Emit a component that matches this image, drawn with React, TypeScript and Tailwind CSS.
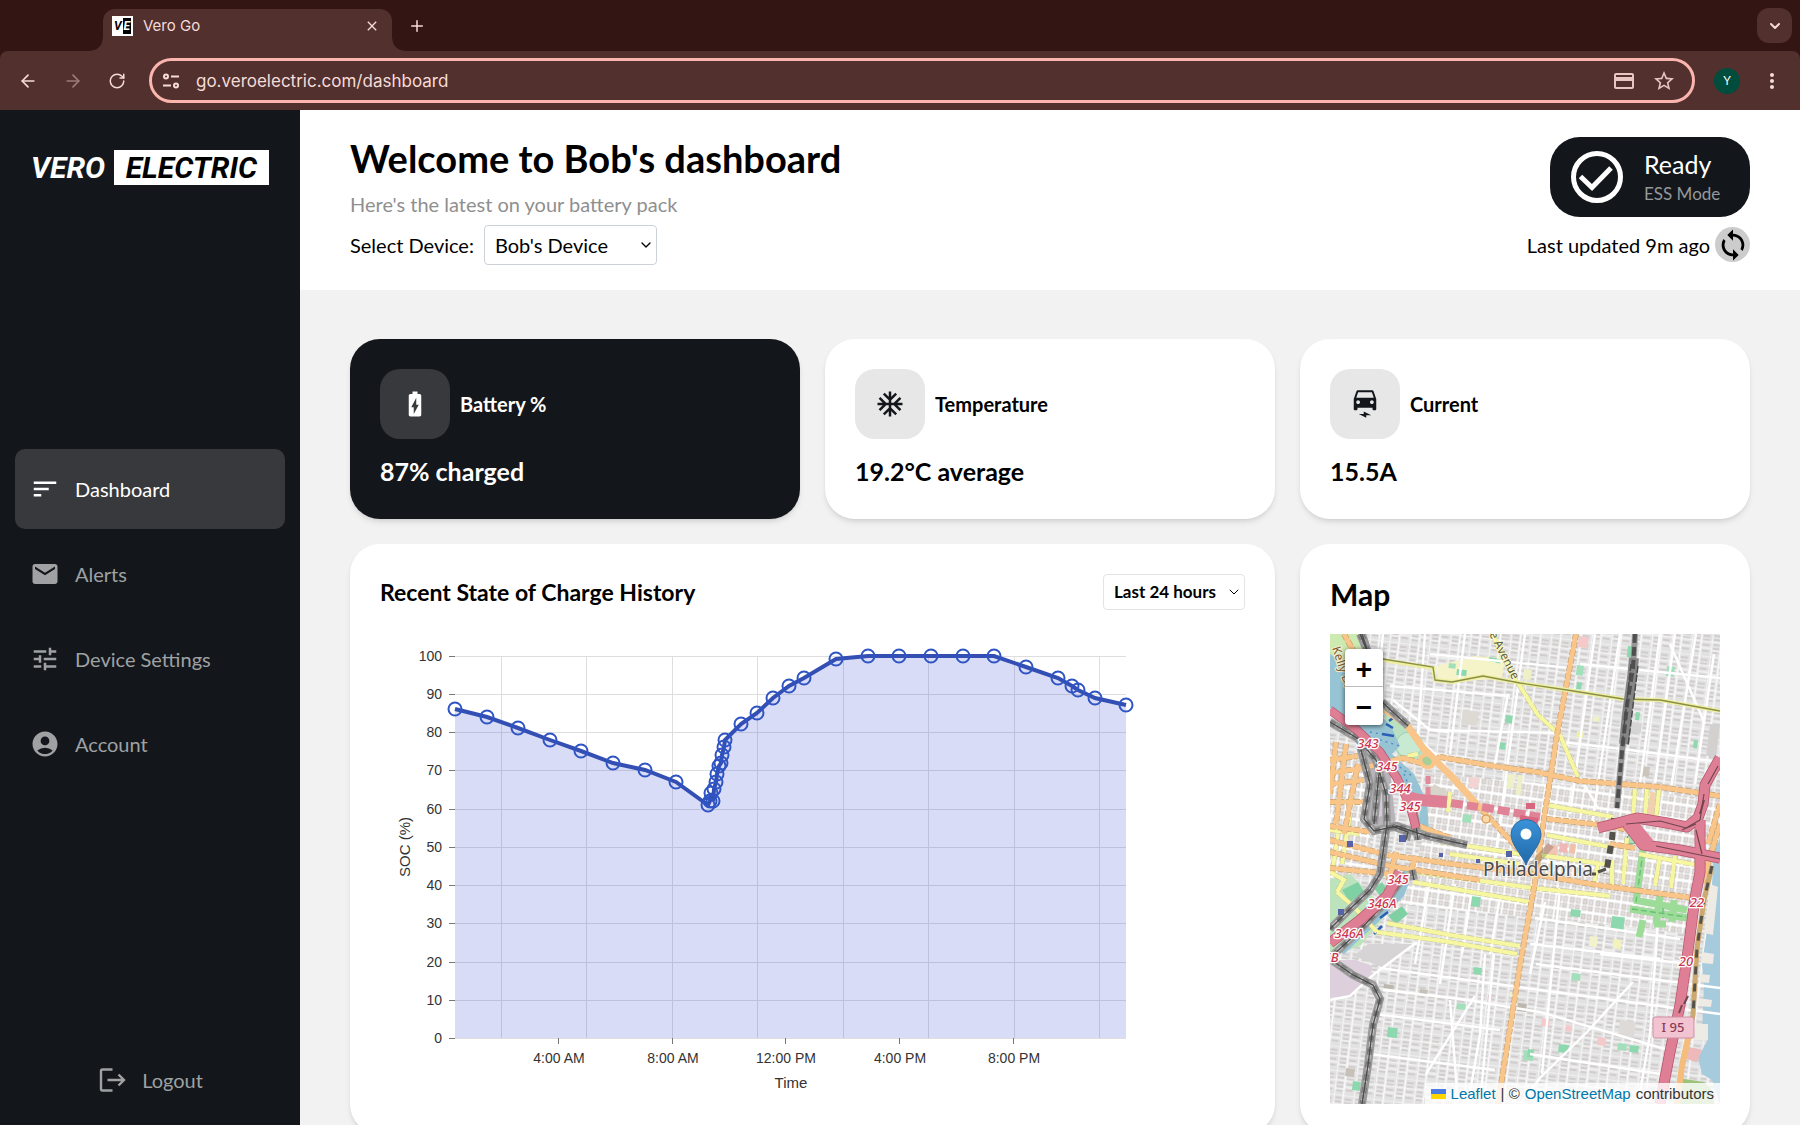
import type { ReactNode } from 'react';
import {
  MdAccountCircle,
  MdBatteryChargingFull,
  MdAcUnit,
  MdClose,
  MdEmail,
  MdLoop,
  MdMoreVert,
  MdOutlineCreditCard,
  MdSort,
  MdStarBorder,
  MdTune,
} from 'react-icons/md';
import { ArrowLeft, ArrowRight, ChevronDown, Plus, RotateCw } from 'lucide-react';

const navItems = [
  { label: 'Dashboard', Icon: MdSort, active: true },
  { label: 'Alerts', Icon: MdEmail, active: false },
  { label: 'Device Settings', Icon: MdTune, active: false },
  { label: 'Account', Icon: MdAccountCircle, active: false },
];

// [x inside the chart, state of charge in %]
const socPoints: [number, number][] = [
  [75, 86], [107, 84], [138, 81], [170, 78], [201, 75], [233, 72], [265, 70], [296, 67],
  [328, 61], [330, 62], [331, 64], [333, 62], [334, 65], [336, 67], [337, 69], [339, 71],
  [341, 72], [342, 74], [344, 76], [345, 78], [361, 82], [377, 85], [393, 89], [409, 92],
  [424, 94], [456, 99], [488, 100], [519, 100], [551, 100], [583, 100], [614, 100],
  [646, 97], [678, 94], [692, 92], [698, 91], [715, 89], [746, 87],
];

const yTicks = [0, 10, 20, 30, 40, 50, 60, 70, 80, 90, 100];
const xGrid = [122, 207, 293, 378, 464, 549, 635, 720];
const xTicks: [number, string][] = [
  [179, '4:00 AM'],
  [293, '8:00 AM'],
  [406, '12:00 PM'],
  [520, '4:00 PM'],
  [634, '8:00 PM'],
];

const socY = (value: number) => Math.round(428 - value * 3.825);

function BrowserBar() {
  return (
    <div className="shrink-0 bg-[#331613] font-[Inter,sans-serif] text-[#f6dbd7]">
      <div className="flex h-[51px] items-end pl-[103px] pr-2">
        <div className="relative flex h-[42px] w-[289px] items-center rounded-t-xl bg-[#51302e] pb-2 pl-[9px] pr-3">
          <span className="absolute -left-3 bottom-0 size-3 bg-[radial-gradient(circle_at_top_left,transparent_11px,#51302e_12px)]" />
          <span className="absolute -right-3 bottom-0 size-3 bg-[radial-gradient(circle_at_top_right,transparent_11px,#51302e_12px)]" />
          <span className="flex h-5 w-[21px] items-center justify-center gap-px bg-white font-[Roboto,sans-serif] text-xs font-bold italic leading-4 text-black">
            <span>V</span>
            <span className="bg-black px-px text-white">E</span>
          </span>
          <span className="ml-[10px] flex-1 text-[15px]">Vero Go</span>
          <button type="button" aria-label="Close tab">
            <MdClose className="size-4" />
          </button>
        </div>
        <button type="button" aria-label="New tab" className="mb-4 ml-4">
          <Plus className="size-[18px]" strokeWidth={2} />
        </button>
        <button
          type="button"
          aria-label="Search tabs"
          className="mb-2 ml-auto flex size-[35px] items-center justify-center rounded-xl bg-[#51302e]"
        >
          <ChevronDown className="size-4" strokeWidth={3} />
        </button>
      </div>

      <div className="flex h-[59px] items-center rounded-t-lg bg-[#51302e] pl-[18px] pr-4">
        <button type="button" aria-label="Back">
          <ArrowLeft className="size-5" strokeWidth={2} />
        </button>
        <button type="button" aria-label="Forward" className="ml-[25px] text-[#9b7b78]">
          <ArrowRight className="size-5" strokeWidth={2} />
        </button>
        <button type="button" aria-label="Reload" className="ml-[25px]">
          <RotateCw className="size-[18px]" strokeWidth={2} />
        </button>
        <div className="ml-[23px] flex h-[45px] flex-1 items-center rounded-full border-[3px] border-[#fbb5ae] pl-[11px] pr-4">
          <svg viewBox="0 0 16 16" className="size-4" fill="none" stroke="currentColor" strokeWidth="2">
            <circle cx="3" cy="3.5" r="2" />
            <path d="M8 3.5h8M0 12.5h8" />
            <circle cx="13" cy="12.5" r="2" />
          </svg>
          <input
            aria-label="Address"
            className="ml-[17px] h-8 min-w-0 flex-1 bg-transparent text-[17px] leading-8 outline-none"
            defaultValue="go.veroelectric.com/dashboard"
          />
          <MdOutlineCreditCard className="size-6 text-[#e8c5c1]" />
          <MdStarBorder className="ml-4 size-6 text-[#e8c5c1]" />
        </div>
        <span className="ml-[19px] flex size-[26px] items-center justify-center rounded-full bg-[#004d3d] text-xs text-white">
          Y
        </span>
        <button type="button" aria-label="Menu" className="ml-5">
          <MdMoreVert className="size-6" />
        </button>
      </div>
    </div>
  );
}

function Sidebar() {
  return (
    <aside className="grid w-[300px] shrink-0 grid-cols-1 grid-rows-[1fr_auto_1fr] bg-[#13171b] px-[15px] pb-[2px]">
      <div className="flex items-start justify-between pl-4 pr-4 pt-10 font-[Roboto,sans-serif] text-[30px] font-bold italic leading-[35px] text-white">
        <span>VERO</span>
        <span className="bg-white px-3 text-black">ELECTRIC</span>
      </div>

      <nav className="flex flex-col gap-[5px]">
        {navItems.map(({ label, Icon, active }) => (
          <a
            key={label}
            href="#"
            className={`flex h-20 items-center gap-[15px] rounded-[10px] pl-[15px] text-xl ${
              active ? 'bg-[#38393d] text-white' : 'text-[#9fa1a3]'
            }`}
          >
            <Icon className="size-[30px]" />
            {label}
          </a>
        ))}
      </nav>

      <button
        type="button"
        className="flex items-center gap-[15px] self-end justify-self-center pb-7 text-xl leading-[30px] text-[#9fa1a3]"
      >
        <svg viewBox="0 0 30 30" className="size-[30px]" fill="none" stroke="currentColor" strokeWidth="2.4">
          <path d="M15.5 4.5H5.5a1.5 1.5 0 0 0-1.5 1.5v18a1.5 1.5 0 0 0 1.5 1.5h10" />
          <path d="M10.5 15H27M21.5 9.5l5.5 5.5-5.5 5.5" />
        </svg>
        Logout
      </button>
    </aside>
  );
}

function Header() {
  return (
    <header className="flex justify-between bg-white px-[50px] pb-[25px] pt-6">
      <div>
        <h1 className="mb-[7px] text-[38px] font-bold leading-[48px]">Welcome to Bob's dashboard</h1>
        <p className="mb-[6px] text-xl leading-[30px] text-[#8f8f8f]">Here's the latest on your battery pack</p>
        <div className="flex items-center text-xl">
          <label htmlFor="device">Select Device:</label>
          <div className="relative ml-[10px]">
            <select
              id="device"
              className="h-10 w-[173px] appearance-none rounded border border-[#cdd2d8] bg-white pl-[10px]"
            >
              <option>Bob's Device</option>
            </select>
            <ChevronDown className="pointer-events-none absolute right-[3px] top-3 size-4" />
          </div>
        </div>
      </div>

      <div className="flex flex-col items-end pt-[3px]">
        <div className="flex h-20 w-[200px] items-center rounded-[30px] bg-[#13171b] pl-5">
          <svg viewBox="0 0 54 54" className="size-[54px]" fill="none" stroke="white" strokeWidth="5">
            <circle cx="27" cy="27" r="23.5" />
            <path d="M10.5 26.5l11.5 11L41 18" />
          </svg>
          <div className="ml-5 pt-1">
            <div className="text-[25px] leading-[30px] text-white">Ready</div>
            <div className="text-[17px] leading-[30px] text-[#96989a]">ESS Mode</div>
          </div>
        </div>
        <div className="mt-[10px] flex items-center text-xl">
          Last updated 9m ago
          <button
            type="button"
            aria-label="Refresh"
            className="ml-[5px] flex size-[35px] items-center justify-center rounded-full bg-[#cccccc]"
          >
            <MdLoop className="size-[34px]" />
          </button>
        </div>
      </div>
    </header>
  );
}

function StatCard({ icon, title, value, dark = false }: { icon: ReactNode; title: string; value: string; dark?: boolean }) {
  return (
    <div className={`rounded-[30px] p-[30px] shadow-md ${dark ? 'bg-[#13171b] text-white' : 'bg-white'}`}>
      <div className="flex items-center gap-[10px]">
        <div
          className={`flex size-[70px] items-center justify-center rounded-[20px] ${
            dark ? 'bg-[#38393d]' : 'bg-[#e7e7e7] text-[#13171b]'
          }`}
        >
          {icon}
        </div>
        <h2 className="text-xl font-bold">{title}</h2>
      </div>
      <p className="mb-[2px] mt-4 text-[25px] font-bold leading-8">{value}</p>
    </div>
  );
}

function ElectricCarIcon() {
  return (
    <svg viewBox="0 0 24 24" className="size-[30px]" fill="currentColor">
      <path
        fillRule="evenodd"
        d="M18.92 2.01C18.72 1.42 18.16 1 17.5 1h-11c-.66 0-1.21.42-1.42 1.01L3 8v8c0 .55.45 1 1 1h1c.55 0 1-.45 1-1v-1h12v1c0 .55.45 1 1 1h1c.55 0 1-.45 1-1V8l-2.08-5.99zM6.5 12c-.83 0-1.5-.67-1.5-1.5S5.67 9 6.5 9 8 9.67 8 10.5 7.33 12 6.5 12zm11 0c-.83 0-1.5-.67-1.5-1.5S16.67 9 17.5 9s1.5.67 1.5 1.5-.67 1.5-1.5 1.5zM5 7l1.5-4.5h11L19 7H5z"
      />
      <path d="M7 20h4v-2l6 3h-4v2z" />
    </svg>
  );
}

function SocChart() {
  const line = socPoints.map(([x, v]) => `${x},${socY(v)}`).join(' ');

  return (
    <svg
      viewBox="0 0 780 494"
      className="block w-[780px] max-w-full font-['Liberation_Sans',Arial,sans-serif]"
      role="img"
      aria-label="State of charge over time"
    >
      <g stroke="#dedede">
        {yTicks.map((v) => (
          <path key={v} d={`M75 ${socY(v) + 0.5}H746`} />
        ))}
        {xGrid.map((x) => (
          <path key={x} d={`M${x - 0.5} 46V428`} />
        ))}
      </g>
      <polygon points={`75,428 ${line} 746,428`} fill="#3f51d0" fillOpacity="0.2" />
      <g stroke="#777777">
        {yTicks.map((v) => (
          <path key={v} d={`M69 ${socY(v) + 0.5}h6`} />
        ))}
        {xTicks.map(([x]) => (
          <path key={x} d={`M${x - 0.5} 428v6`} />
        ))}
      </g>
      <g fontSize="14" fill="#333333">
        {yTicks.map((v) => (
          <text key={v} x="62" y={socY(v) + 5} textAnchor="end">
            {v}
          </text>
        ))}
        {xTicks.map(([x, label]) => (
          <text key={x} x={x} y="453" textAnchor="middle">
            {label}
          </text>
        ))}
      </g>
      <g fontSize="15" fill="#333333" textAnchor="middle">
        <text x="411" y="478">
          Time
        </text>
        <text transform="translate(30 237) rotate(-90)">SOC (%)</text>
      </g>
      <g fill="none" stroke="#2f54c4">
        <polyline points={line} strokeWidth="4" stroke="#334fb4" />
        {socPoints.map(([x, v], i) => (
          <circle key={i} cx={x} cy={socY(v)} r="6.5" strokeWidth="2" />
        ))}
      </g>
    </svg>
  );
}

const orangeRoads = [
  'M246 0L227 101 215 178 205 248 190 331 168 470',
  'M110 123L157 131 207 138 250 147 290 150 330 153 390 162',
  'M53 74L77 91 93 114 123 144 150 174 195 222',
  'M0 139L33 134 73 124 97 131 110 123',
  'M0 206L57 221 130 231 190 238 267 251 363 264',
  'M0 218L60 232 150 246M0 234L70 241M0 192L40 198',
  'M217 185L273 191 300 196M280 210L305 214M390 190L372 250',
  'M6 108L0 160M16 110L6 190M28 130L14 200M0 126L28 122M0 150L34 146M0 168L34 168',
  'M14 0L24 18M66 218L58 250M86 222L78 244M84 190L120 204',
  'M390 170L378 210',
];

const yellowRoads = [
  'M162 0L183 41 208 81 230 101 248 143',
  'M87 238L203 254 280 262M83 248L200 268',
  'M57 289L120 301 190 312M47 298L120 308 187 320M7 258L25 274 47 298M7 258L14 246 0 238',
  'M217 171L283 183M217 201L280 213M210 221L280 231M112 208L190 220M120 220L190 230',
  'M305 155L303 183M317 155L315 184M329 156L326 184M297 204L293 250M282 226L282 256',
  'M120 158L118 178M78 122L88 120M8 200L2 240M20 180L12 230M0 196L30 200M330 222L325 252M345 222L341 254',
  'M268 230L264 250M206 232L203 244M309 220L372 232',
];

const whiteRoads = [
  'M53 0L47 60M95 0L88 100M135 0L120 120M195 0L165 225M178 60L165 130M265 0L240 180M290 0L262 190',
  'M330 0L310 150M345 0L325 150M366 0L340 160M384 20L365 150M340 10L375 90',
  'M55 75L110 124 118 136M63 66L100 96 118 98M100 96L230 99M60 52L180 62M100 20L240 34M250 30L390 44M232 108L300 116 390 128',
  'M87 308L43 341 20 362 0 366M50 334L210 356 390 380M53 356L130 365 210 378 335 415',
  'M303 348L257 398 210 444 190 470M155 320L150 400 138 470M164 320L150 470M120 366L128 470',
  'M215 268L200 340M230 254L212 440M328 288L320 400 308 470M170 262L160 320M250 143L268 174',
  'M100 245L85 330M125 250L110 350M142 255L132 320M206 330L390 354M200 310L330 325M96 440L145 362M270 320L360 330',
  'M205 284L350 305M45 380L170 396M40 420L165 436M200 420L330 440',
];

const rails = [
  'M0 88L27 104 46 126 56 160 57 190 50 240 40 256 22 273 0 295',
  'M30 112L40 150 34 185 44 197 67 192 97 202 137 211',
  'M52 68L78 92M30 0L40 24M32 0L44 36',
  'M0 325L23 341 43 351 50 365 43 391 38 431 32 470',
  'M76 240L56 268 28 298 0 324M82 236L84 246',
  'M62 192L78 198 76 206M50 130L44 190M84 176L88 206',
];

const parks: [number, number, number, number][] = [
  [119, 29, 7, 5], [127, 35, 10, 6], [159, 23, 8, 4], [166, 25, 5, 4], [176, 81, 9, 8], [169, 108, 7, 7],
  [247, 31, 7, 10], [247, 48, 5, 7], [298, 12, 4, 11], [337, 32, 8, 10], [306, 78, 4, 8], [364, 106, 4, 8],
  [133, 180, 9, 8], [141, 262, 10, 10], [144, 333, 8, 7], [127, 369, 9, 6], [58, 393, 10, 10], [23, 447, 8, 9],
  [194, 416, 10, 10], [241, 275, 10, 7], [282, 282, 13, 13], [242, 339, 9, 7], [229, 410, 10, 8], [198, 415, 6, 8],
  [288, 409, 9, 7], [300, 411, 9, 7],
];

const tinted: [number, number, number, number, string][] = [
  [133, 76, 16, 14, '#dcdad3'], [249, 2, 10, 11, '#f4c9ca'], [194, 35, 8, 10, '#eef0c8'], [263, 82, 7, 5, '#eef0c8'],
  [247, 97, 7, 6, '#eef0a8'], [311, 132, 9, 10, '#c9c5bb'], [140, 143, 9, 10, '#f5d3d3'], [178, 140, 7, 14, '#eef0c8'],
  [188, 141, 5, 20, '#eef0c8'], [320, 158, 7, 26, '#f2cfae'], [215, 210, 13, 10, '#f2c4b4'], [230, 209, 8, 9, '#f0b8b4'],
  [240, 210, 6, 9, '#f0c0a8'], [16, 434, 9, 8, '#c5c1b8'], [90, 355, 8, 5, '#c5c1b8'], [188, 369, 9, 8, '#bcb8ae'],
  [212, 384, 8, 8, '#f4c9ca'], [268, 403, 8, 8, '#f4c9ca'], [236, 391, 6, 6, '#f4c9ca'], [284, 305, 8, 9, '#f2f2bc'],
  [260, 302, 8, 10, '#f2f2cc'], [290, 386, 16, 18, '#dedad8'], [54, 350, 10, 4, '#bcb8ae'], [158, 361, 4, 8, '#e6c6cc'],
  [180, 358, 9, 5, '#f0efd0'], [380, 90, 10, 32, '#d3d0d0'], [300, 88, 12, 10, '#d5d5d5'],
];

const stations: [number, number, number][] = [
  [17, 207, 6], [69, 201, 7], [109, 219, 4], [146, 225, 4], [176, 217, 6], [8, 275, 6],
];

const shields: [number, number, string][] = [
  [38, 114, '343'], [57, 137, '345'], [70, 159, '344'], [80, 177, '345'], [68, 250, '345'],
  [52, 274, '346A'], [19, 304, '346A'], [1, 328, '6B'], [367, 273, '22'], [356, 332, '20'],
];

function CityMap() {
  return (
    <svg
      viewBox="0 0 390 470"
      preserveAspectRatio="xMidYMid slice"
      className="size-full font-['Noto_Sans',sans-serif]"
      role="img"
      aria-label="Map of Philadelphia"
    >
      <defs>
        <pattern id="blocks" width="20" height="24" patternUnits="userSpaceOnUse" patternTransform="rotate(7)">
          <rect width="20" height="24" fill="#e3e2e2" />
          <path d="M2 3h6M2 7h6M2 12h6M2 16h6M2 20h6M11 4h7M11 8h7M11 13h7M11 19h7" stroke="#cbc7c6" strokeWidth="1.3" />
          <path d="M0 0H20M0 9.5H20M0 18H10M10 16H20" stroke="#f4f3f3" strokeWidth="1.3" />
          <path d="M0 0V24M9.5 0V24" stroke="#fbfbfb" strokeWidth="1.5" />
        </pattern>
        <pattern id="downtown" width="13" height="15" patternUnits="userSpaceOnUse" patternTransform="rotate(8)">
          <rect width="13" height="15" fill="#ffffff" />
          <rect x="2" y="2" width="4" height="5" fill="#dfdad7" stroke="#c5bfbc" strokeWidth=".8" />
          <rect x="8" y="2" width="4" height="5" fill="#e4e2e0" stroke="#cac5c3" strokeWidth=".8" />
          <rect x="2" y="9" width="4" height="4" fill="#e4e2e0" stroke="#cac5c3" strokeWidth=".8" />
          <rect x="8" y="9" width="4" height="4" fill="#dfdad7" stroke="#c5bfbc" strokeWidth=".8" />
        </pattern>
        <linearGradient id="pin" x1="0" x2="0" y1="0" y2="1">
          <stop offset="0" stopColor="#3a93d8" />
          <stop offset="1" stopColor="#2268a8" />
        </linearGradient>
      </defs>

      <rect width="390" height="470" fill="url(#blocks)" />
      <path d="M100 140L390 165 365 300 70 270 95 200z" fill="url(#downtown)" />
      <path d="M0 120L40 130 40 240 0 250z" fill="url(#downtown)" />

      {/* land use */}
      <path d="M0 0H30L44 30 30 40 0 20z" fill="#cdebb0" />
      <path d="M106 32L145 22 175 24 172 44 150 46 108 48z" fill="#f5f3c8" />
      <path d="M52 66L80 90 97 112 96 124 70 126 58 100z" fill="#b9e0c0" />
      <circle cx="79" cy="111" r="13" fill="#c8ead2" stroke="#a5cdb0" />
      <path d="M0 245L20 240 42 262 60 276 30 312 0 322z" fill="#bce3bc" />
      <path d="M12 256l16-8 6 10-14 10zM44 254l8-6 4 6-6 8zM58 282l14-10 6 8-12 10z" fill="#7fd0a3" />
      <path d="M0 326L26 326 42 332 40 346 18 362 0 364z" fill="#ddd0dc" />
      <path d="M38 310L84 310 54 334 24 322z" fill="#d6d4d4" />
      <path d="M34 116L60 136 66 192 44 198 32 185 38 150z" fill="#b9b4b9" />
      <path d="M46 140L54 160 52 182 46 184z" fill="#d6cbdb" />
      <path d="M104 150L126 162 110 168 98 160z" fill="#d8d4cc" />
      {parks.map(([x, y, w, h], i) => (
        <rect key={i} x={x} y={y} width={w} height={h} fill={i % 3 ? '#8ed8b0' : '#a4dfbb'} transform={`rotate(7 ${x} ${y})`} />
      ))}
      {tinted.map(([x, y, w, h, fill], i) => (
        <rect key={i} x={x} y={y} width={w} height={h} fill={fill} transform={`rotate(7 ${x} ${y})`} />
      ))}

      {/* rivers */}
      <path d="M0 20L12 28 20 58 60 90 70 112 62 120 84 140 97 168 99 196 88 204 90 172 70 142 44 110 18 90 0 74z" fill="#96c4d4" />
      <path d="M84 236L74 262 46 290 14 320 8 316 38 286 60 262 74 236z" fill="#96c4d4" />
      <path d="M390 206L384 214 382 250 378 290 372 330 374 350 372 400 378 405 368 424 372 440 382 446 390 470z" fill="#a5cbdd" />
      <path d="M380 250l8 3-5 48-9-2zM372 318l12 2-1 10-11-1zM370 340l10 1-1 8-9-1zM368 364l14 2-1 7-13-1zM365 390h13v16h-13z" fill="#eeeae4" />
      <path d="M354 412l18 4-5 12-14-4z" fill="#edb9ba" />
      <path d="M348 444l26 4 10 10 0 12H344z" fill="#9cc37b" />
      <path d="M44 104l26 8M40 98l22 4M60 126l22 16M74 140l14 34" stroke="#5586c4" strokeWidth="1.3" strokeDasharray="2 4" fill="none" />
      <path d="M56 90l7 4M59 87l4-3M52 100l12 2M44 300l8-8M50 284l8-6" stroke="#2a5fb4" strokeWidth="2.5" fill="none" />

      {/* streets */}
      <g fill="none" stroke="#ffffff" strokeWidth="2.4">
        {whiteRoads.map((d) => (
          <path key={d} d={d} />
        ))}
      </g>

      <path
        d="M313 214L306 268M300 275L357 284M304 266L357 276M330 262L326 290M344 266L342 288M313 286L309 303M324 290h12"
        stroke="#9cdc98"
        strokeWidth="7"
        fill="none"
      />
      <path d="M313 218L306 268M302 275L356 283M333 274v10" stroke="#63bd72" strokeWidth="1.3" fill="none" strokeDasharray="6 3" />
      <circle cx="302" cy="205" r="5" fill="#a9e0ba" stroke="#5aa878" />

      <g fill="none">
        <g stroke="#c4c48c" strokeWidth="5">
          {yellowRoads.map((d) => (
            <path key={d} d={d} strokeDasharray="7 2" />
          ))}
        </g>
        <g stroke="#f6f7a0" strokeWidth="4">
          {yellowRoads.map((d) => (
            <path key={d} d={d} />
          ))}
        </g>
        <g stroke="#c9a474" strokeWidth="6">
          {orangeRoads.map((d) => (
            <path key={d} d={d} strokeDasharray="6 2" />
          ))}
        </g>
        <g stroke="#f9c589" strokeWidth="4.6">
          {orangeRoads.map((d) => (
            <path key={d} d={d} />
          ))}
        </g>
        <path d="M53 74L77 91 93 114 123 144 150 174" stroke="#f9c589" strokeWidth="7" />
        <ellipse cx="97" cy="127" rx="7" ry="6" stroke="#f9c589" strokeWidth="4" fill="#a9cf98" transform="rotate(35 97 127)" />
        <circle cx="156" cy="185" r="4" stroke="#d9a368" strokeWidth="1.5" fill="#f9d9a8" />
      </g>

      {/* Girard Avenue trolley */}
      <g fill="none">
        <path d="M53 26L103 34 105 46 122 48 153 42 190 49 237 56 293 65 330 66 390 77" stroke="#eef0a0" strokeWidth="4" />
        <path d="M53 25L103 33 105 46 122 48 153 42 190 49 237 56 293 65 330 66 390 77" stroke="#8a8e48" strokeWidth="1.4" />
      </g>

      {/* railways */}
      <g fill="none">
        <g stroke="#9a9a9a" strokeWidth="8">
          {rails.map((d) => (
            <path key={d} d={d} />
          ))}
        </g>
        <g stroke="#d0d0d0" strokeWidth="3" strokeDasharray="7 5">
          {rails.map((d) => (
            <path key={d} d={d} />
          ))}
        </g>
        <g stroke="#4d4d4d" strokeWidth="1.4">
          {rails.map((d) => (
            <path key={d} d={d} />
          ))}
        </g>
        <g stroke="#4a4a4a" strokeWidth="5" strokeDasharray="6 7">
          {rails.map((d) => (
            <path key={d} d={d} strokeOpacity=".45" />
          ))}
        </g>
        <path d="M305 0L303 34 297 71 292 118 287 174" stroke="#979797" strokeWidth="6" />
        <path d="M304 24L302 44 297 80 294 110" stroke="#858585" strokeWidth="10" />
        <path d="M305 0L303 34 297 71 292 118 287 174" stroke="#4f4f4f" strokeWidth="4" strokeDasharray="9 4" />
        <path d="M301 30L292 112M308 32L298 112" stroke="#4b4b4b" strokeWidth="1.5" strokeDasharray="7 2" />
        <path d="M284 184L282 205 276 240" stroke="#55524a" strokeWidth="6" strokeDasharray="8 6" />
      </g>

      {/* motorways */}
      <g fill="none" strokeLinejoin="round">
        <g stroke="#b4566e" strokeWidth="11">
          <path d="M268 194L307 184 337 189 357 193 368 184 373 170 375 151 390 124" />
          <path d="M297 190L313 211 350 216 390 224" />
          <path d="M370 186L370 238 365 264 357 324 350 371 340 418 330 470" />
          <path d="M0 76L27 96 50 118 67 144 80 171 86 194" strokeWidth="9" />
          <path d="M70 238L57 262 30 286 0 309" />
        </g>
        <g stroke="#df7f95" strokeWidth="9.5">
          <path d="M268 194L307 184 337 189 357 193 368 184 373 170 375 151 390 124" />
          <path d="M297 190L313 211 350 216 390 224" />
          <path d="M370 186L370 238 365 264 357 324 350 371 340 418 330 470" />
          <path d="M0 76L27 96 50 118 67 144 80 171 86 194" strokeWidth="7.5" />
          <path d="M70 238L57 262 30 286 0 309" />
          <path d="M73 162L90 166 117 168" strokeWidth="12" />
        </g>
        <path d="M300 188L318 210" stroke="#df7f95" strokeWidth="13" />
        <path d="M121 169L148 173M152 173L210 183" stroke="#e08397" strokeWidth="8" strokeDasharray="12 4" />
        <path d="M196 172h9M190 184l18 3" stroke="#d8667f" strokeWidth="6" />
        <path d="M98 142L98 162" stroke="#e2899b" strokeWidth="5" strokeDasharray="8 3" />
        <path
          d="M296 190L330 187 356 194 370 186 374 160M352 196L366 190M326 212L390 225M366 196L372 220M378 150L388 132"
          stroke="#70464f"
          strokeWidth="1.2"
        />
        <path d="M352 371l-3 8M358 362l-4 8M370 180L374 166" stroke="#70464f" strokeWidth="2" />
        <path d="M382 232L374 266 367 314 363 381 352 432 347 470" stroke="#cba96f" strokeWidth="5" />
        <path d="M382 232L374 266 367 314 363 381 352 432 347 470" stroke="#55524a" strokeWidth="3" strokeDasharray="8 9" />
        <path d="M359 400L352 432 347 470" stroke="#f5bd7b" strokeWidth="6" />
      </g>

      {stations.map(([x, y, s]) => (
        <rect key={x} x={x} y={y} width={s} height={s} fill="#5663a8" />
      ))}

      {/* labels */}
      <g fontSize="13" fontStyle="italic" fontWeight="500" fill="#cb3650" stroke="#ffffff" strokeWidth="2.5" paintOrder="stroke" textAnchor="middle">
        {shields.map(([x, y, label]) => (
          <text key={y} x={x} y={y}>
            {label}
          </text>
        ))}
      </g>
      <rect x="323" y="383" width="41" height="21" rx="2" fill="#f2c4d2" stroke="#cf8fa4" />
      <text x="343" y="398" fontSize="13" fontWeight="500" fill="#8c3a55" textAnchor="middle">
        I 95
      </text>
      <text transform="translate(159 0) rotate(63)" fontSize="12" fill="#5c5a38" stroke="#fbfad0" strokeWidth="1.5" paintOrder="stroke">
        e Avenue
      </text>
      <text transform="translate(2 14) rotate(72)" fontSize="12" fill="#7a5b2c" stroke="#f6efd4" strokeWidth="2" paintOrder="stroke">
        Kelly Drive
      </text>

      {/* marker */}
      <path d="M198 231l20-22 6 4-16 18z" fill="#000000" fillOpacity=".18" />
      <path
        d="M196 231C193 222 181 211 181 200.5a15 15 0 0 1 30 0C211 211 199 222 196 231z"
        fill="url(#pin)"
        stroke="#2a6ca6"
      />
      <circle cx="196" cy="200" r="5.5" fill="#ffffff" />
      <text x="153" y="242" fontSize="19" fill="#4b4b4b" stroke="#ffffff" strokeOpacity=".7" strokeWidth="2" paintOrder="stroke">
        Philadelphia
      </text>
      <path d="M262 240h4M268 238l8-3" stroke="#55524a" strokeWidth="3" />
    </svg>
  );
}

function MapCard() {
  return (
    <section className="rounded-[30px] bg-white p-[30px] shadow-md">
      <h2 className="mb-5 text-[30px] font-bold leading-10">Map</h2>
      <div className="relative h-[470px] overflow-hidden bg-[#e6e5e5]">
        <CityMap />
        <div className="absolute left-[15px] top-[15px] flex w-[38px] flex-col divide-y divide-[#bbbbbb] rounded bg-white font-['Liberation_Sans',Arial,sans-serif] text-[28px] font-bold leading-none shadow-[0_1px_5px_rgba(0,0,0,0.65)]">
          <button type="button" aria-label="Zoom in" className="h-[38px] pt-1">
            +
          </button>
          <button type="button" aria-label="Zoom out" className="h-[38px] pt-1">
            −
          </button>
        </div>
        <div className="absolute bottom-0 right-0 flex items-center gap-[5px] whitespace-nowrap bg-white/80 px-[6px] font-['Liberation_Sans',Arial,sans-serif] text-[15px] leading-[21px] text-[#333333]">
          <a href="#" className="flex items-center gap-[5px] text-[#0078a8]">
            <svg viewBox="0 0 15 10" className="h-[10px] w-[15px]">
              <path d="M0 0h15v5H0z" fill="#4c7be1" />
              <path d="M0 5h15v5H0z" fill="#ffd500" />
            </svg>
            Leaflet
          </a>
          <span>| ©</span>
          <a href="#" className="text-[#0078a8]">
            OpenStreetMap
          </a>
          <span>contributors</span>
        </div>
      </div>
    </section>
  );
}

export default function App() {
  return (
    <div className="flex h-screen flex-col overflow-hidden font-[Lato,sans-serif] text-black">
      <BrowserBar />
      <div className="flex min-h-0 flex-1">
        <Sidebar />
        <main className="min-w-0 flex-1 overflow-hidden bg-[#f2f2f2]">
          <Header />
          <div className="grid grid-cols-3 gap-[25px] px-[50px] pt-[49px]">
            <StatCard dark icon={<MdBatteryChargingFull className="size-[30px]" />} title="Battery %" value="87% charged" />
            <StatCard icon={<MdAcUnit className="size-[30px]" />} title="Temperature" value="19.2°C average" />
            <StatCard icon={<ElectricCarIcon />} title="Current" value="15.5A" />

            <section className="col-span-2 rounded-[30px] bg-white p-[30px] shadow-md">
              <div className="flex h-9 items-center justify-between">
                <h2 id="history-title" className="text-[23px] font-bold">
                  Recent State of Charge History
                </h2>
                <div className="relative">
                  <select
                    aria-labelledby="history-title"
                    className="h-9 w-[142px] appearance-none rounded border border-[#e4e4e4] bg-white pl-[10px] text-[17px] font-bold"
                  >
                    <option>Last 24 hours</option>
                  </select>
                  <ChevronDown className="pointer-events-none absolute right-[3px] top-[10px] size-4" strokeWidth={1.5} />
                </div>
              </div>
              <SocChart />
            </section>

            <MapCard />
          </div>
        </main>
      </div>
    </div>
  );
}
